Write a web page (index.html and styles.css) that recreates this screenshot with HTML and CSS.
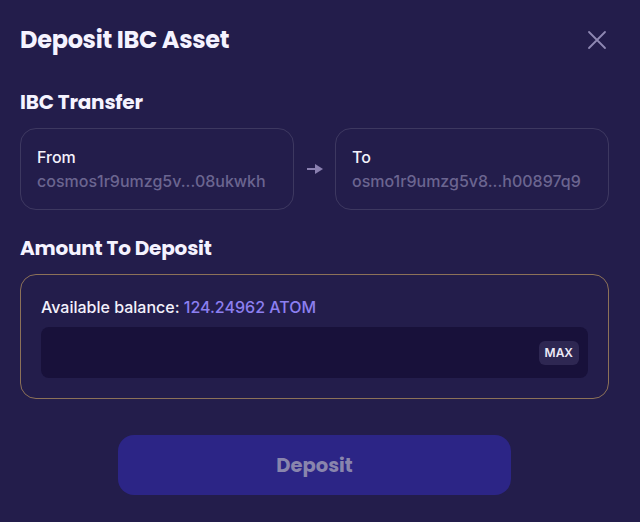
FILE: index.html
```html
<!DOCTYPE html>
<html>
<head>
<meta charset="utf-8">
<link rel="stylesheet" href="styles.css">
</head>
<body>
<div class="modal">
  <div class="header">
    <h1 class="title">Deposit IBC Asset</h1>
    <button class="close" aria-label="Close">
      <svg width="20" height="20" viewBox="0 0 20 20"><path d="M2 2L18 18M18 2L2 18" stroke="#8f88b3" stroke-width="1.8" stroke-linecap="round"/></svg>
    </button>
  </div>
  <h2 class="section">IBC Transfer</h2>
  <div class="transfer">
    <div class="card">
      <div class="card-label">From</div>
      <div class="card-addr">cosmos1r9umzg5v...08ukwkh</div>
    </div>
    <div class="arrow">
      <svg width="18" height="12" viewBox="0 0 18 12"><path d="M1 6H10" stroke="#8a80b0" stroke-width="2"/><path d="M9 1L17 6L9 11Z" fill="#8a80b0"/></svg>
    </div>
    <div class="card">
      <div class="card-label">To</div>
      <div class="card-addr">osmo1r9umzg5v8...h00897q9</div>
    </div>
  </div>
  <h2 class="section amount-title">Amount To Deposit</h2>
  <div class="amount-box">
    <div class="balance">Available balance: <span class="balance-val">124.24962 ATOM</span></div>
    <div class="input">
      <button class="max">MAX</button>
    </div>
  </div>
  <div class="actions">
    <button class="deposit">Deposit</button>
  </div>
</div>
</body>
</html>
```

FILE: styles.css
```css
* { box-sizing: border-box; }
html, body { margin: 0; padding: 0; background: #231d4b; }
body { font-family: Inter, "Noto Sans", sans-serif; color: #fff; }
.modal { padding: 24px 31px 0 20px; display: flex; flex-direction: column; }
.header { display: flex; justify-content: space-between; align-items: center; height: 32px; }
.title { margin: 0; font-family: Poppins, "Noto Sans", Inter, sans-serif; font-size: 24px; font-weight: 700; line-height: 32px; letter-spacing: -0.3px; color: #f5f3ff; }
.close { background: none; border: 0; padding: 0; width: 20px; height: 20px; margin-right: 2px; display: flex; }
.section { margin: 0; font-family: Poppins, "Noto Sans", Inter, sans-serif; font-size: 20px; font-weight: 700; line-height: 28px; letter-spacing: -0.2px; color: #f5f3ff; margin-top: 32px; }
.transfer { display: flex; align-items: center; margin-top: 12px; gap: 0; }
.card { flex: 1; height: 82px; border: 1px solid rgba(255,255,255,0.12); border-radius: 16px; padding: 18px 16px 0 16px; }
.arrow { width: 41px; display: flex; justify-content: center; padding-left: 1px; }
.card-label { font-size: 16px; font-weight: 500; line-height: 20px; color: #f3f1fb; }
.card-addr { font-size: 16px; font-weight: 500; line-height: 20px; margin-top: 4px; color: #6b6590; }
.amount-title { margin-top: 24px; }
.amount-box { margin-top: 12px; height: 125px; border: 1px solid #8c7158; border-radius: 16px; padding: 21px 20px 0 20px; }
.balance { font-size: 16px; font-weight: 500; line-height: 22px; color: #f3f1fb; }
.balance-val { color: #8c7ff0; }
.input { margin-top: 9px; height: 51px; background: #18113a; border-radius: 8px; display: flex; align-items: center; justify-content: flex-end; padding-right: 9px; }
.max { background: #2e2752; border: 0; border-radius: 6px; color: #ece9f7; font-family: Inter, sans-serif; font-weight: 600; font-size: 12px; height: 24px; padding: 0 6px; }
.actions { display: flex; justify-content: center; margin-top: 36px; }
.deposit { width: 393px; height: 60px; border: 0; border-radius: 16px; background: #2c2586; color: #8985ad; font-family: Poppins, "Noto Sans", Inter, sans-serif; font-size: 19.5px; font-weight: 700; }
```
